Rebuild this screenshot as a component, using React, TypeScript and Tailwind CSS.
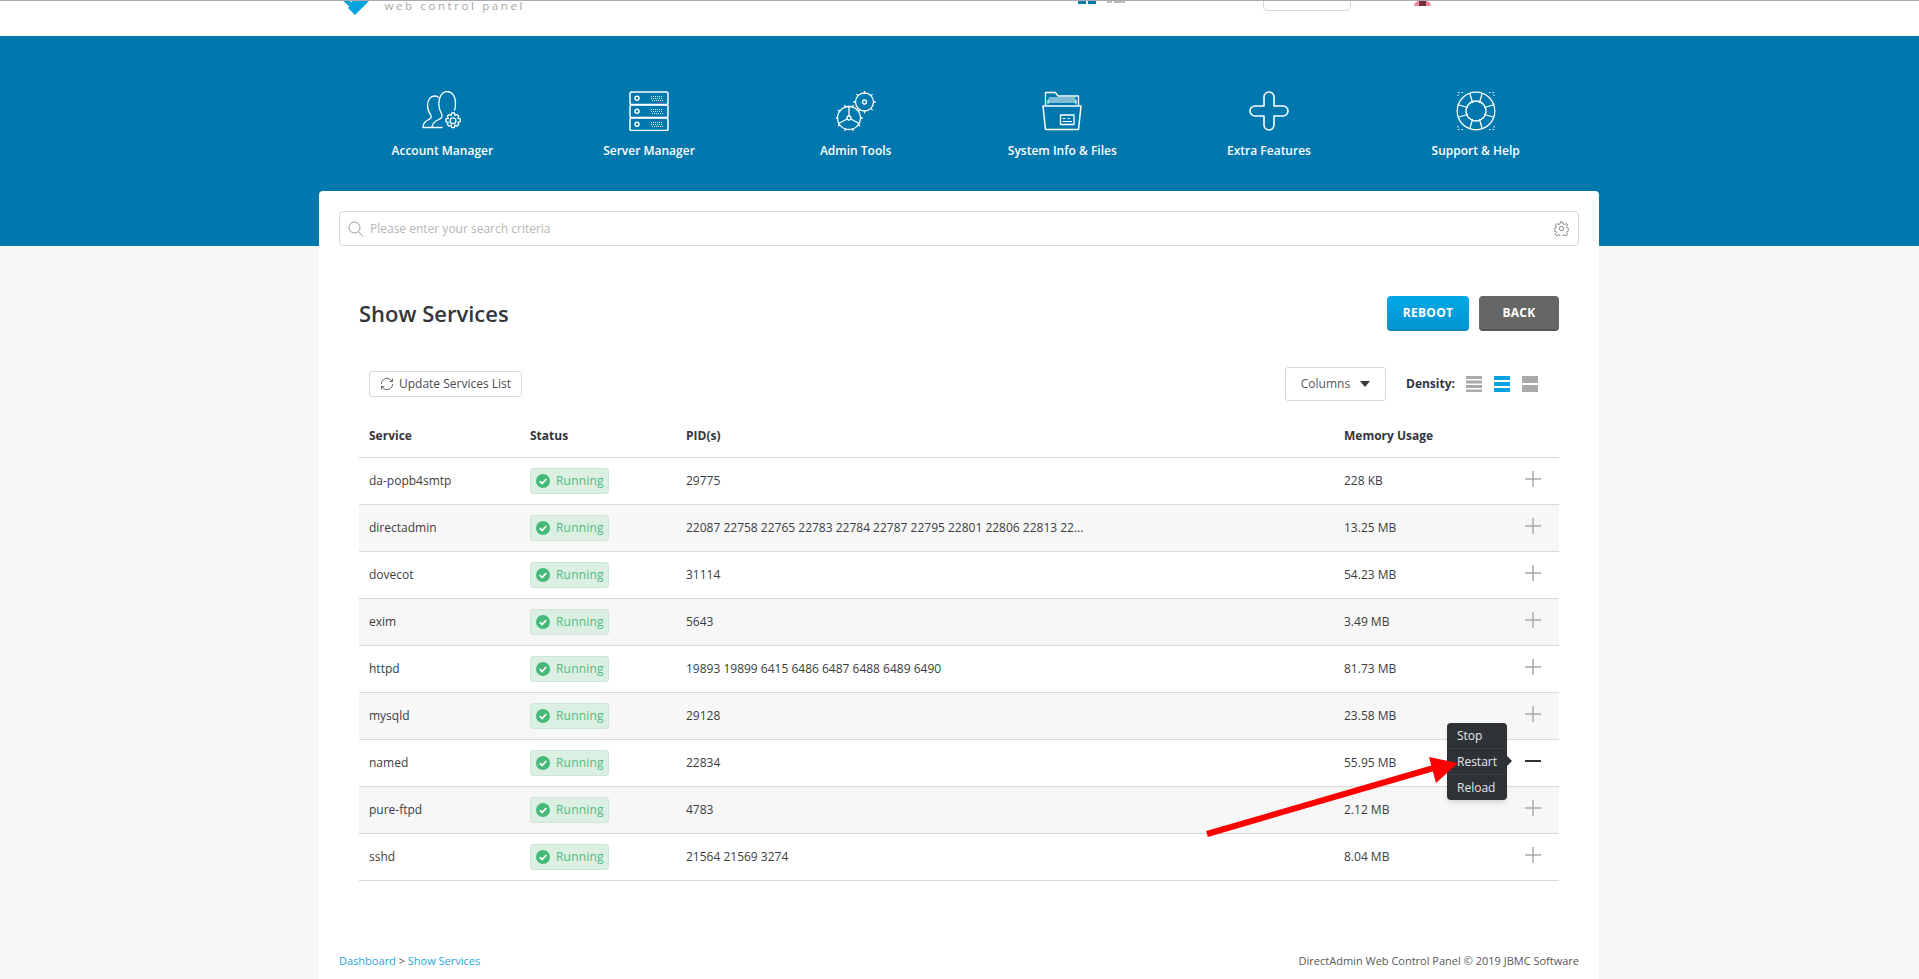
import React from "react";

const rows = [
  ["da-popb4smtp", "29775", "228 KB"],
  ["directadmin", "22087 22758 22765 22783 22784 22787 22795 22801 22806 22813 22...", "13.25 MB"],
  ["dovecot", "31114", "54.23 MB"],
  ["exim", "5643", "3.49 MB"],
  ["httpd", "19893 19899 6415 6486 6487 6488 6489 6490", "81.73 MB"],
  ["mysqld", "29128", "23.58 MB"],
  ["named", "22834", "55.95 MB"],
  ["pure-ftpd", "4783", "2.12 MB"],
  ["sshd", "21564 21569 3274", "8.04 MB"],
];

const stroke = { fill: "none", stroke: "#fff", strokeWidth: 1.3, strokeLinecap: "round", strokeLinejoin: "round" } as const;

function Gear({ cx, cy, r, teeth }: { cx: number; cy: number; r: number; teeth: number }) {
  const t = Array.from({ length: teeth }, (_, i) => {
    const a = (i / teeth) * Math.PI * 2;
    return (
      <line
        key={i}
        x1={cx + Math.cos(a) * r}
        y1={cy + Math.sin(a) * r}
        x2={cx + Math.cos(a) * (r + 1.8)}
        y2={cy + Math.sin(a) * (r + 1.8)}
      />
    );
  });
  return (
    <g {...stroke}>
      <circle cx={cx} cy={cy} r={r} />
      {t}
    </g>
  );
}

function AccountIcon() {
  return (
    <svg width="40" height="40" viewBox="0 0 40 40">
      <g {...stroke}>
        <path d="M1 36.500h19M1 36.500c0-3.500 2-6 5-7.500 2.500-1.200 3.800-2.500 3-4.500C7 21.500 5.500 18 5.500 14.500 5.500 9 8.500 5 12.500 5c1.500 0 3 .4 4 1.200" />
        <path d="M10 36.500c0-3.500 2.500-6 6-7.500 3-1.300 4.800-2.800 3.800-5.500-1.500-2.700-3-6-3-10.500 0-7 3.300-12.500 8.200-12.500s8.500 4.500 8.500 11c0 3 0 5.500-1 7.500" />
        <path d="M29.800 22h2.600l.5 2.400 2-.9 1.900 1.800-1 2 2.400.6v2.800l-2.400.6 1 2-1.900 1.900-2-1-.5 2.400h-2.600l-.6-2.400-2 1-1.900-1.900 1-2-2.400-.6v-2.800l2.400-.6-1-2 1.900-1.800 2 .9z" />
        <circle cx="31" cy="29.800" r="2.900" />
      </g>
    </svg>
  );
}

function ServerIcon() {
  return (
    <svg width="40" height="40" viewBox="0 0 40 40">
      <g {...stroke} strokeWidth="1.500">
        {[1, 14, 27].map((y) => (
          <g key={y}>
            <rect x="1" y={y} width="38" height="12.500" rx="1.500" />
            <circle cx="8" cy={y + 6.200} r="2" />
            <path d={`M22 ${y + 4.500}h12M22 ${y + 6.500}h12M23 ${y + 8.500}h11`} strokeWidth="0.900" strokeDasharray="1 1" strokeLinecap="butt" />
          </g>
        ))}
      </g>
    </svg>
  );
}

function AdminIcon() {
  return (
    <svg width="40" height="40" viewBox="0 0 40 40">
      <Gear cx={28.500} cy={11} r={9} teeth={8} />
      <Gear cx={13} cy={27} r={11.500} teeth={10} />
      <g {...stroke}>
        <circle cx="28.500" cy="11" r="2" />
        <circle cx="13" cy="27" r="2" />
        <path d="M13 25V15.500M14.800 28l8.600 4.500M11.200 28l-8.600 4.500" />
      </g>
    </svg>
  );
}

function FolderIcon() {
  return (
    <svg width="40" height="40" viewBox="0 0 40 40">
      <g {...stroke}>
        <path d="M3.500 14V1.500h10l2.500 3.500h20.500v9" />
        <path d="M6 13V9h28v4M6 11h28M7 7h26" strokeWidth="1" />
        <path d="M1 15h38l-2.500 23.500h-33z" strokeWidth="1.500" />
        <rect x="18.500" y="24" width="13.500" height="9.500" />
        <path d="M21 27.500h2M26 27.500h1.500M21 30.500h8.500" strokeWidth="1" />
      </g>
    </svg>
  );
}

function PlusIcon() {
  return (
    <svg width="40" height="40" viewBox="0 0 40 40">
      <path
        {...stroke}
        strokeWidth="1.600"
        d="M15 6a5 5 0 0 1 10 0v9h9a5 5 0 0 1 0 10h-9v9a5 5 0 0 1-10 0v-9H6a5 5 0 0 1 0-10h9z"
      />
    </svg>
  );
}

function BuoyIcon() {
  return (
    <svg width="40" height="40" viewBox="0 0 40 40">
      <g {...stroke}>
        <circle cx="20" cy="20" r="18.800" />
        <circle cx="20" cy="20" r="10" />
        <path d="M14 3l2.500 8.500M26 3l-2.500 8.500M14 37l2.500-8.500M26 37l-2.500-8.500M3 14l8.500 2.500M3 26l8.500-2.500M37 14l-8.500 2.500M37 26l-8.500-2.500" />
        <path d="M7 1.500H2v5M33 1.500h5v5M7 38.500H2v-5M33 38.500h5v-5" strokeWidth="1" strokeDasharray="1.500 2" strokeLinecap="butt" />
      </g>
    </svg>
  );
}

const nav: [string, React.ReactNode][] = [
  ["Account Manager", <AccountIcon />],
  ["Server Manager", <ServerIcon />],
  ["Admin Tools", <AdminIcon />],
  ["System Info & Files", <FolderIcon />],
  ["Extra Features", <PlusIcon />],
  ["Support & Help", <BuoyIcon />],
];

function SearchIcon() {
  return (
    <svg width="16" height="16" viewBox="0 0 16 16" fill="none" stroke="#9a9a9a" strokeWidth="1">
      <circle cx="6.500" cy="6.500" r="5.500" />
      <path d="M10.500 10.500L15 15.500" />
    </svg>
  );
}

function CogIcon() {
  return (
    <svg width="15" height="15" viewBox="0 0 24 24" fill="none" stroke="#777" strokeWidth="1.500" strokeLinejoin="round">
      <circle cx="12" cy="12" r="3.500" />
      <path d="M10.300 1.500h3.400l.6 3 2.600 1.100 2.600-1.700 2.400 2.400-1.700 2.600 1.100 2.600 3 .6v3.400l-3 .6-1.100 2.600 1.700 2.600-2.400 2.400-2.600-1.700-2.600 1.100-.6 3h-3.400l-.6-3-2.600-1.100-2.600 1.700-2.400-2.400 1.700-2.600-1.100-2.600-3-.6v-3.400l3-.6 1.100-2.600-1.700-2.600 2.400-2.400 2.600 1.700 2.600-1.100z" />
    </svg>
  );
}

function RefreshIcon() {
  return (
    <svg width="14" height="14" viewBox="0 0 16 16" fill="none" stroke="#555" strokeWidth="1">
      <path d="M1.500 8a6.500 6.500 0 0 1 11-4.700L14 5" />
      <path d="M14.500 8a6.500 6.500 0 0 1-11 4.700L2 11" />
      <path d="M14.300 1.800V5.200H11M1.700 14.200V10.800H5" />
    </svg>
  );
}

function Density({ bars, color }: { bars: number; color: string }) {
  const h = bars === 4 ? 3 : bars === 3 ? 4 : 7;
  const gap = bars === 4 ? 1.500 : 2;
  return (
    <svg width="16" height="16" viewBox="0 0 16 16">
      {Array.from({ length: bars }, (_, i) => (
        <rect key={i} x="0" y={i * (h + gap)} width="16" height={h} fill={color} />
      ))}
    </svg>
  );
}

function Running() {
  return (
    <span className="inline-flex h-[26px] w-[79px] items-center gap-[6px] rounded-[3px] border border-[#cfe5d8] bg-[#dbf0e3] pl-[5px] text-[12px] tracking-[0.2px] text-[#4fbb80]">
      <svg width="14" height="14" viewBox="0 0 14 14">
        <circle cx="7" cy="7" r="7" fill="#46b978" />
        <path d="M3.800 7.200l2.300 2.300 4.200-4.500" fill="none" stroke="#fff" strokeWidth="1.700" />
      </svg>
      Running
    </span>
  );
}

function PlusMark({ active }: { active?: boolean }) {
  return active ? (
    <svg width="16" height="16" viewBox="0 0 16 16" className="mb-[3px] block">
      <path d="M0 8h16" stroke="#2e3136" strokeWidth="2" />
    </svg>
  ) : (
    <svg width="16" height="16" viewBox="0 0 16 16" className="mb-[3px] block">
      <path d="M0 8h16M8 0v16" stroke="#aaaaaa" strokeWidth="1.500" />
    </svg>
  );
}

export default function App() {
  return (
    <div className="relative flex h-[979px] w-full flex-col overflow-hidden bg-[#f7f7f7] font-['Open_Sans',sans-serif] text-[12px] text-[#3a3d42]">
      <header className="h-[36px] shrink-0 overflow-hidden border-t border-[#a9a9b0] bg-white">
        <div className="mx-auto flex w-[1240px] items-start">
          <svg width="28" height="15" viewBox="0 0 28 15" className="ml-[2px] mt-[-1px] shrink-0">
            <path d="M0 0h7l3 3-3 3z" fill="#00a3e0" />
            <path d="M11 0h17L13 15l-7-7z" fill="#00a3e0" />
          </svg>
          <span className="ml-[15px] mt-[-2px] w-[141px] whitespace-nowrap text-[11.5px] leading-[14px] tracking-[2.6px] text-[#a5a5a5]">web control panel</span>
          <div className="ml-[552px] flex gap-[2px]">
            <span className="h-[3px] w-[8px] bg-[#0077ad]" />
            <span className="h-[3px] w-[8px] bg-[#0077ad]" />
          </div>
          <div className="ml-[11px] flex gap-[2px]">
            <span className="h-[2px] w-[5px] bg-[#bbbbbb]" />
            <span className="h-[2px] w-[11px] bg-[#bbbbbb]" />
          </div>
          <div className="ml-[138px] mt-[-6px] h-[16px] w-[88px] rounded-[4px] border border-[#d9d9d9]" />
          <div className="ml-[63px] h-[5px] w-[17px] rounded-t-full bg-[#e78a9b]">
            <div className="mx-auto h-[5px] w-[7px] bg-[#7a3040]" />
          </div>
        </div>
      </header>

      <nav className="h-[210px] shrink-0 bg-[#0077ad] pt-[55px]">
        <div className="ml-[339px] grid w-[1240px] grid-cols-6">
          {nav.map(([label, icon]) => (
            <div key={label} className="flex flex-col items-center text-white">
              {icon}
              <span className="mt-[10px] text-[12px] leading-[20px] font-semibold">{label}</span>
            </div>
          ))}
        </div>
      </nav>

      <main className="relative ml-[319px] mt-[-55px] flex w-[1280px] flex-1 flex-col rounded-t-[4px] bg-white pl-[20px] pr-[20px] pt-[20px]">
        <div className="flex h-[35px] items-center rounded-[4px] border border-[#d9d9d9] bg-white pl-[8px] pr-[9px]">
          <SearchIcon />
          <span className="ml-[6px] flex-1 text-[#b5b5b5]">Please enter your search criteria</span>
          <CogIcon />
        </div>

        <div className="mt-[50px] flex h-[35px] items-center justify-between pl-[20px] pr-[20px]">
          <h1 className="text-[22px] leading-[35px] font-semibold text-[#33363b]">Show Services</h1>
          <div className="flex gap-[10px]">
            <button className="h-[35px] w-[82px] rounded-[4px] border-b-2 border-[#0088c0] bg-gradient-to-b from-[#00a9e6] to-[#0096d1] text-[12px] font-bold tracking-[0.3px] text-white">
              REBOOT
            </button>
            <button className="h-[35px] w-[80px] rounded-[4px] border-b-2 border-[#555555] bg-[#666765] text-[12px] font-bold tracking-[0.3px] text-white">
              BACK
            </button>
          </div>
        </div>

        <div className="mt-[36px] flex h-[34px] items-center pl-[20px] pr-[20px]">
          <button className="ml-[10px] flex h-[26px] w-[153px] items-center justify-center gap-[5px] rounded-[3px] border border-[#d9d9d9] text-[12px] text-[#4a4d52]">
            <RefreshIcon />
            Update Services List
          </button>
          <div className="flex-1" />
          <button className="flex h-[34px] w-[101px] items-center justify-center gap-[10px] rounded-[3px] border border-[#d9d9d9] text-[12px] text-[#55585c]">
            Columns
            <span className="h-0 w-0 border-x-[5px] border-t-[6px] border-x-transparent border-t-[#33363b]" />
          </button>
          <span className="ml-[20px] w-[49px] whitespace-nowrap text-[12px] font-bold text-[#33363b]">Density:</span>
          <div className="ml-[11px] mr-[21px] flex gap-[12px]">
            <Density bars={4} color="#aaaaaa" />
            <Density bars={3} color="#00a3e0" />
            <Density bars={2} color="#aaaaaa" />
          </div>
        </div>

        <div className="pl-[20px] pr-[20px]">
          <table className="mt-[2px] w-full table-fixed border-collapse">
            <colgroup>
              <col className="w-[161px]" />
              <col className="w-[156px]" />
              <col className="w-[658px]" />
              <col />
            </colgroup>
            <thead>
              <tr className="h-[54px] border-b border-[#d9d9d9] text-left text-[12px] text-[#33363b]">
                <th className="pl-[10px] pt-[12px] font-bold">Service</th>
                <th className="pl-[10px] pt-[12px] font-bold">Status</th>
                <th className="pl-[10px] pt-[12px] font-bold">PID(s)</th>
                <th className="pl-[10px] pt-[12px] font-bold">Memory Usage</th>
              </tr>
            </thead>
            <tbody>
              {rows.map(([name, pid, mem], i) => (
                <tr key={name} className={`h-[47px] border-b border-[#d9d9d9] ${i % 2 === 1 ? "bg-[#f7f7f7]" : "bg-white"}`}>
                  <td className="pl-[10px]">{name}</td>
                  <td className="pl-[10px]">
                    <div className="flex items-center">
                      <Running />
                    </div>
                  </td>
                  <td className="pl-[10px]">{pid}</td>
                  <td className="pl-[10px]">
                    <div className="flex items-center justify-between pr-[18px]">
                      <span>{mem}</span>
                      <PlusMark active={name === "named"} />
                    </div>
                  </td>
                </tr>
              ))}
            </tbody>
          </table>
        </div>

        <footer className="mt-[70px] flex items-center justify-between text-[11px] leading-[20px] text-[#55585c]">
          <span>
            <span className="text-[#1ea7e0]">Dashboard</span> &gt; <span className="text-[#1ea7e0]">Show Services</span>
          </span>
          <span>DirectAdmin Web Control Panel © 2019 JBMC Software</span>
        </footer>

        <div className="absolute left-[1128px] top-[532px] w-[60px] rounded-[4px] bg-[#2e3136] text-[12px] text-[#e6e6e6] shadow-md">
          <div className="h-[26px] border-b border-[#3b3e43] pl-[10px] leading-[25px]">Stop</div>
          <div className="h-[26px] border-b border-[#3b3e43] pl-[10px] leading-[25px]">Restart</div>
          <div className="h-[25px] pl-[10px] leading-[25px]">Reload</div>
          <span className="absolute right-[-5px] top-[33px] h-0 w-0 border-y-[5px] border-l-[5px] border-y-transparent border-l-[#2e3136]" />
        </div>
      </main>

      <svg className="pointer-events-none absolute left-0 top-0" width="1919" height="979" viewBox="0 0 1919 979">
        <path d="M1207 834L1444 765" stroke="#ff0000" strokeWidth="6" />
        <path d="M1429 757L1458 763L1436 783z" fill="#ff0000" />
      </svg>
    </div>
  );
}
